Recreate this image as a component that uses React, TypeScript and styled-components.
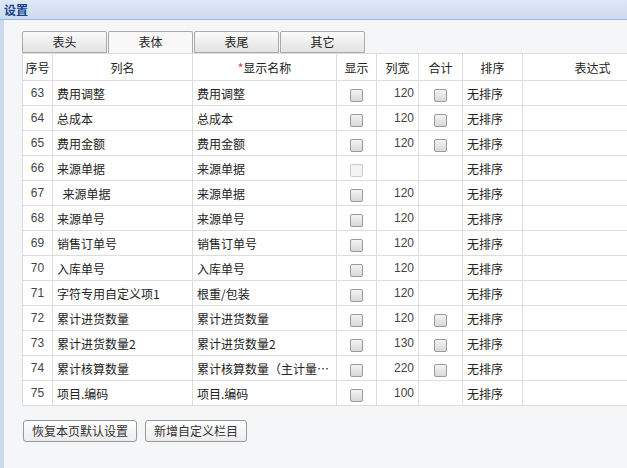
import React from "react";
import styled, { createGlobalStyle } from "styled-components";

const G = createGlobalStyle`
  html,body{margin:0;padding:0;background:#fff;}
  body{font-family:"Noto Sans CJK SC","Liberation Sans",sans-serif;font-size:12px;color:#222;}
`;
const Page = styled.div`width:627px;height:468px;overflow:hidden;display:flex;flex-direction:column;`;
const TitleBar = styled.div`height:20px;flex:none;background:linear-gradient(#dfe8f6,#cddbee);border-bottom:1px solid #99bbe8;color:#15428b;font-weight:bold;padding-left:4px;line-height:19px;box-sizing:border-box;font-size:12px;`;
const Body = styled.div`flex:1;background:#f5f6f8;border-left:4px solid #c9d9ee;padding:11px 0 0 18px;`;
const Tabs = styled.div`display:flex;height:22px;`;
const Tab = styled.div<{ $on?: boolean }>`width:85px;box-sizing:border-box;border:1px solid #aaa;border-bottom:${p => p.$on ? "none" : "1px solid #aaa"};margin-right:1px;text-align:center;line-height:20px;border-radius:2px 2px 0 0;background:${p => p.$on ? "#f8f8f8" : "linear-gradient(#fbfbfb,#e2e2e2)"};`;
const Table = styled.table`border-collapse:collapse;table-layout:fixed;width:640px;background:#fff;border:1px solid #c6c6c6;`;
const Th = styled.th`height:26px;font-weight:normal;border:1px solid #ddd;text-align:center;padding:0;background:#fff;white-space:nowrap;`;
const Td = styled.td<{ $a?: string }>`height:24px;border:1px solid #ddd;padding:0 4px;text-align:${p => p.$a || "left"};white-space:nowrap;overflow:hidden;text-overflow:ellipsis;`;
const Num = styled(Td)`color:#444;font-family:"Liberation Sans",sans-serif;`;
const Box = styled.span<{ $dis?: boolean }>`display:inline-block;width:11px;height:11px;border:1px solid ${p => p.$dis ? "#ccc" : "#9a9a9a"};border-radius:2px;background:${p => p.$dis ? "#f3f3f3" : "linear-gradient(#f4f4f4,#d8d8d8)"};vertical-align:middle;`;
const Btns = styled.div`display:flex;gap:8px;margin-top:14px;padding-left:1px;`;
const Btn = styled.div`height:22px;box-sizing:border-box;border:1px solid #999;border-radius:3px;background:linear-gradient(#fff,#ececec);line-height:20px;padding:0 8px;color:#333;`;

type R = [string, string, string, number, string, boolean];
const rows: R[] = [
  ["63","费用调整","费用调整",1,"120",true],
  ["64","总成本","总成本",1,"120",true],
  ["65","费用金额","费用金额",1,"120",true],
  ["66","来源单据","来源单据",2,"",false],
  ["67","\u00a0\u00a0来源单据","来源单据",1,"120",false],
  ["68","来源单号","来源单号",1,"120",false],
  ["69","销售订单号","销售订单号",1,"120",false],
  ["70","入库单号","入库单号",1,"120",false],
  ["71","字符专用自定义项1","根重/包装",1,"120",false],
  ["72","累计进货数量","累计进货数量",1,"120",true],
  ["73","累计进货数量2","累计进货数量2",1,"130",true],
  ["74","累计核算数量","累计核算数量（主计量单位）",1,"220",true],
  ["75","项目.编码","项目.编码",1,"100",false],
];
const widths = [30,140,144,40,42,44,60,140];

export default function App() {
  return (
    <Page>
      <G />
      <TitleBar>设置</TitleBar>
      <Body>
        <Tabs><Tab>表头</Tab><Tab $on>表体</Tab><Tab>表尾</Tab><Tab>其它</Tab></Tabs>
        <Table>
          <colgroup>{widths.map((w, i) => <col key={i} style={{ width: w }} />)}</colgroup>
          <thead><tr>
            <Th>序号</Th><Th>列名</Th><Th><span style={{ color: "#e33" }}>*</span>显示名称</Th><Th>显示</Th><Th>列宽</Th><Th>合计</Th><Th>排序</Th><Th>表达式</Th>
          </tr></thead>
          <tbody>
            {rows.map(r => (
              <tr key={r[0]}>
                <Num $a="center">{r[0]}</Num>
                <Td>{r[1]}</Td>
                <Td>{r[2]}</Td>
                <Td $a="center"><Box $dis={r[3] === 2} /></Td>
                <Num $a="right">{r[4]}</Num>
                <Td $a="center">{r[5] && <Box />}</Td>
                <Td>无排序</Td>
                <Td />
              </tr>
            ))}
          </tbody>
        </Table>
        <Btns><Btn>恢复本页默认设置</Btn><Btn>新增自定义栏目</Btn></Btns>
      </Body>
    </Page>
  );
}
